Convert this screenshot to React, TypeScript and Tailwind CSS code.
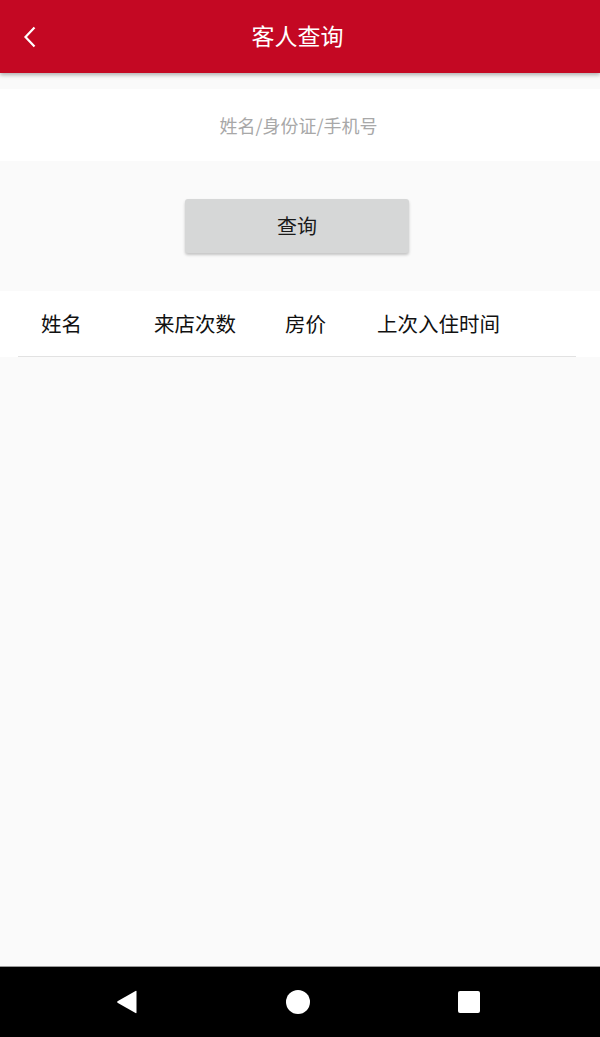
import React from "react";

const columns = [
  { label: "姓名", width: "w-[113px]" },
  { label: "来店次数", width: "w-[131px]" },
  { label: "房价", width: "w-[92px]" },
  { label: "上次入住时间", width: "w-auto" },
];

const App = () => {
  return (
    <div
      className="flex flex-col h-[1037px] w-[600px] bg-[#fafafa] overflow-hidden"
      style={{ fontFamily: '"Noto Sans CJK SC", "Noto Sans", sans-serif' }}
    >
      {/* header */}
      <div className="relative z-10 flex items-center h-[73px] bg-[#c40823] shadow-[0_2px_4px_rgba(0,0,0,0.3)]">
        <div className="w-[60px] flex items-center pl-[23px]">
          <svg width="14" height="22" viewBox="0 0 14 22" fill="none">
            <path d="M11.5 1.5 L2.5 11 L11.5 20.5" stroke="white" strokeWidth="2.2" />
          </svg>
        </div>
        <div className="flex-1 text-center text-white text-[23px] pr-[65px] -mt-[2px]">客人查询</div>
      </div>

      {/* search input */}
      <div className="mt-[16px] h-[72px] bg-white flex items-center justify-center">
        <input
          className="w-full h-full text-center text-[18px] pr-[3px] bg-transparent outline-none placeholder:text-[#a8a8a8]"
          placeholder="姓名/身份证/手机号"
        />
      </div>

      {/* button */}
      <div className="flex pl-[185px] pt-[38px] pb-[38px]">
        <button className="w-[224px] h-[54px] rounded-[3px] bg-[#d6d7d7] text-[#1a1a1a] text-[20px] shadow-[0_2px_3px_rgba(0,0,0,0.22)]">
          查询
        </button>
      </div>

      {/* table header */}
      <div className="bg-white h-[66px] pl-[18px] pr-[24px]">
        <div className="flex items-center h-full border-b border-[#e2e2e2] pl-[23px] text-[20.5px] text-[#111]">
          {columns.map((c) => (
            <div key={c.label} className={c.width}>
              {c.label}
            </div>
          ))}
        </div>
      </div>

      <div className="flex-1" />

      {/* android nav bar */}
      <div className="h-[71px] bg-black border-t border-[#9a9a9a] flex items-center pl-[116px] gap-[148px]">
        <svg width="22" height="24" viewBox="0 0 22 24">
          <path d="M20.5 1.5 L20.5 22.5 Q20.5 23.5 19.5 23 L1.5 12.8 Q0.8 12 1.5 11.2 L19.5 1 Q20.5 0.5 20.5 1.5 Z" fill="white" />
        </svg>
        <div className="w-[24px] h-[24px] rounded-full bg-white" />
        <div className="w-[22px] h-[22px] rounded-[2px] bg-white" />
      </div>
    </div>
  );
};

export default App;
